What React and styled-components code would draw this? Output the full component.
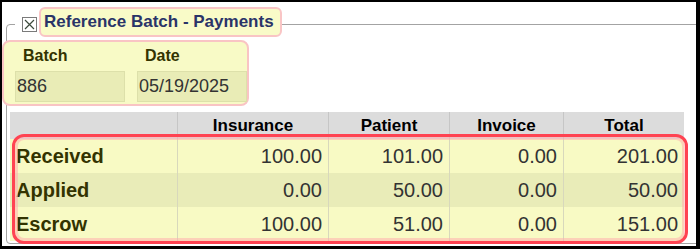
import React from "react";
import styled, { createGlobalStyle, css } from "styled-components";

const GlobalStyle = createGlobalStyle`
  html, body { margin: 0; padding: 0; background: #fff; }
  body { font-family: "Liberation Sans", Arial, sans-serif; }
  * { box-sizing: border-box; }
`;

const Frame = styled.div`
  width: 700px;
  height: 249px;
  border-style: solid;
  border-color: #000;
  border-width: 2px 4px 3px 2px;
  background: #fff;
  overflow: hidden;
`;

const Group = styled.fieldset`
  margin: 5px -10px 0 4px;
  padding: 0 0 2px 3px;
  border: 1px solid #a3a3a3;
  border-radius: 4px;
  min-width: 0;
`;

const Legend = styled.legend`
  margin-left: 5px;
  padding: 0 0 5px 7px;
`;

const LegendRow = styled.div`
  display: flex;
  align-items: flex-start;
  gap: 2px;
`;

const CheckIcon = styled.svg`
  display: block;
  margin-top: 10px;
  flex: none;
`;

const TitleBox = styled.span`
  display: inline-block;
  height: 30px;
  border: 2px solid #f9c5c5;
  border-radius: 6px;
  background: #f9fbc8;
  padding: 0 6px 0 3px;
  font-size: 17px;
  font-weight: bold;
  line-height: 26px;
  color: #2a3468;
  white-space: nowrap;
`;

const BatchBox = styled.div`
  width: 247px;
  height: 66px;
  margin: -2px 0 0 -8px;
  border: 2px solid #f9c4c4;
  border-radius: 8px;
  background: #f8fac6;
  padding: 5px 0 2px 11px;
  display: grid;
  grid-template-columns: 110px 110px;
  column-gap: 12px;
  align-content: start;
`;

const FieldLabel = styled.div`
  font-size: 16px;
  font-weight: bold;
  line-height: 18px;
  color: #333300;
  padding-left: 8px;
  margin-bottom: 6px;
`;

const FieldValue = styled.div`
  height: 31px;
  background: #e9ecb6;
  border: 1px solid #dde0aa;
  font-size: 18px;
  line-height: 28px;
  color: #333;
  padding-left: 1px;
`;

const cols = css`
  display: grid;
  grid-template-columns: 167px 151px 121px 114px 121px;
`;

const Table = styled.div`
  width: 674px;
  margin-top: 6px;
`;

const HeaderRow = styled.div`
  ${cols};
  height: 27px;
  background: #dcdcdc;
`;

const HeaderCell = styled.div`
  border-left: ${(p) => (p.$first ? "none" : "1px solid #c6c6c6")};
  text-align: center;
  font-size: 17px;
  font-weight: bold;
  line-height: 27px;
  color: #000;
`;

const Body = styled.div`
  position: relative;
  &::after {
    content: "";
    position: absolute;
    left: 2px;
    top: -5px;
    right: -4px;
    bottom: -3px;
    border: 3px solid #ff4352;
    border-radius: 12px;
    box-shadow: inset 0 0 0 3px rgba(255, 175, 175, 0.55);
    pointer-events: none;
  }
`;

const BodyRow = styled.div`
  ${cols};
  height: 34px;
  background: ${(p) => (p.$alt ? "#e9ecb8" : "#f8fac4")};
`;

const Cell = styled.div`
  border-left: 1px solid #d8d8bc;
  text-align: right;
  padding-right: 6px;
  font-size: 20px;
  line-height: 34px;
  color: #333;
`;

const LabelCell = styled.div`
  text-align: left;
  padding-left: 6px;
  font-size: 20px;
  font-weight: bold;
  line-height: 34px;
  color: #333300;
`;

const headers = ["Insurance", "Patient", "Invoice", "Total"];
const rows = [
  { label: "Received", values: ["100.00", "101.00", "0.00", "201.00"] },
  { label: "Applied", values: ["0.00", "50.00", "0.00", "50.00"] },
  { label: "Escrow", values: ["100.00", "51.00", "0.00", "151.00"] },
];

export default function App() {
  return (
    <>
      <GlobalStyle />
      <Frame>
        <Group>
          <Legend>
            <LegendRow>
              <CheckIcon width="15" height="15" viewBox="0 0 15 15">
                <rect x="0.5" y="0.5" width="14" height="14" fill="#fff" stroke="#7a7a7a" />
                <path d="M3 3 L12 12 M12 3 L3 12" stroke="#3c4a3c" strokeWidth="1.2" />
              </CheckIcon>
              <TitleBox>Reference Batch - Payments</TitleBox>
            </LegendRow>
          </Legend>
          <BatchBox>
            <FieldLabel>Batch</FieldLabel>
            <FieldLabel>Date</FieldLabel>
            <FieldValue>886</FieldValue>
            <FieldValue>05/19/2025</FieldValue>
          </BatchBox>
          <Table>
            <HeaderRow>
              <HeaderCell $first />
              {headers.map((h) => (
                <HeaderCell key={h}>{h}</HeaderCell>
              ))}
            </HeaderRow>
            <Body>
              {rows.map((r, i) => (
                <BodyRow key={r.label} $alt={i % 2 === 1}>
                  <LabelCell>{r.label}</LabelCell>
                  {r.values.map((v, j) => (
                    <Cell key={j}>{v}</Cell>
                  ))}
                </BodyRow>
              ))}
            </Body>
          </Table>
        </Group>
      </Frame>
    </>
  );
}
